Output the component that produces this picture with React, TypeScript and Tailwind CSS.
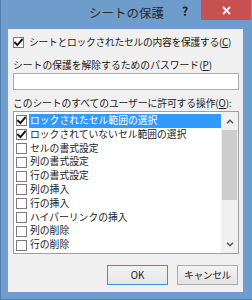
import React from "react";

const Check = () => (
  <svg width="9" height="9" viewBox="0 0 9 9" className="block">
    <path d="M1 4.6 L3.4 7 L8 1.6" fill="none" stroke="#111" strokeWidth="1.9" strokeLinecap="square" />
  </svg>
);

const Box = ({ checked }: { checked?: boolean }) => (
  <div className="w-[11px] h-[11px] shrink-0 border border-[#7a7a7a] bg-white flex items-center justify-center">
    {checked ? <Check /> : null}
  </div>
);

const items: { label: string; checked: boolean; selected?: boolean }[] = [
  { label: "ロックされたセル範囲の選択", checked: true, selected: true },
  { label: "ロックされていないセル範囲の選択", checked: true },
  { label: "セルの書式設定", checked: false },
  { label: "列の書式設定", checked: false },
  { label: "行の書式設定", checked: false },
  { label: "列の挿入", checked: false },
  { label: "行の挿入", checked: false },
  { label: "ハイパーリンクの挿入", checked: false },
  { label: "列の削除", checked: false },
  { label: "行の削除", checked: false },
];

export default function App() {
  return (
    <div className="w-[252px] h-[300px] bg-[#6f9dcb] flex flex-col border-l border-b border-[#4f7eab] font-['Noto_Sans_CJK_JP','Liberation_Sans',sans-serif] text-[#1a1a1a] overflow-hidden">
      <div className="relative h-[29px] shrink-0">
        <div className="pt-[4px] text-center text-[12.5px] leading-[18px] text-[#2b2b2b]">シートの保護</div>
        <div className="absolute left-[181px] top-[3px] text-[12px] font-bold leading-[16px] text-[#222]">?</div>
        <div className="absolute left-[200px] top-0 w-[50px] h-[20px] bg-[#c75050] flex items-center justify-center">
          <svg width="9" height="9" viewBox="0 0 9 9">
            <path d="M1 1 L8 8 M8 1 L1 8" stroke="#fff" strokeWidth="1.8" />
          </svg>
        </div>
      </div>
      <div className="ml-[7px] w-[235px] h-[263px] bg-[#f0f0f0] flex flex-col px-[5px] text-[9.8px]">
        <div className="mt-[6px] h-[14px] flex items-center">
          <Box checked />
          <span className="ml-[5px] leading-[14px] whitespace-nowrap tracking-[-0.3px]">
            シートとロックされたセルの内容を保護する(<span className="underline">C</span>)
          </span>
        </div>
        <div className="mt-[9px] h-[14px] leading-[14px] whitespace-nowrap">
          シートの保護を解除するためのパスワード(<span className="underline">P</span>)
        </div>
        <div className="mt-[1px] h-[17px] w-[226px] bg-white border border-[#abadb3]" />
        <div className="mt-[6px] h-[14px] leading-[14px] whitespace-nowrap tracking-[-0.1px]">
          このシートのすべてのユーザーに許可する操作(<span className="underline">O</span>):
        </div>
        <div className="mt-[1px] h-[143px] w-[226px] border border-[#a0a0a0] bg-white flex">
          <div className="flex-1 flex flex-col pt-[2px] pl-[2px]">
            {items.map((it) => (
              <div key={it.label} className="h-[13.8px] flex items-center">
                <Box checked={it.checked} />
                <div
                  className={
                    "ml-[2px] h-full flex-1 flex items-center pl-[1px] whitespace-nowrap leading-[13.8px] " +
                    (it.selected ? "bg-[#3399ff] text-white" : "")
                  }
                >
                  {it.label}
                </div>
              </div>
            ))}
          </div>
          <div className="w-[17px] bg-[#f0f0f0] flex flex-col">
            <div className="h-[18px] flex items-center justify-center">
              <svg width="8" height="5" viewBox="0 0 8 5">
                <path d="M1 4.2 L4 1.2 L7 4.2" fill="none" stroke="#555" strokeWidth="1.5" />
              </svg>
            </div>
            <div className="flex-1 flex flex-col">
              <div className="mx-[1px] h-[70px] bg-[#cdcdcd]" />
            </div>
            <div className="h-[17px] flex items-center justify-center">
              <svg width="8" height="5" viewBox="0 0 8 5">
                <path d="M1 0.8 L4 3.8 L7 0.8" fill="none" stroke="#555" strokeWidth="1.5" />
              </svg>
            </div>
          </div>
        </div>
        <div className="mt-[11px] flex justify-end gap-[9px]">
          <div className="w-[61px] h-[20px] border border-[#3c8ee6] bg-gradient-to-b from-[#f2f2f2] to-[#e6e6e6] flex items-center justify-center">
            OK
          </div>
          <div className="w-[61px] h-[20px] border border-[#acacac] bg-gradient-to-b from-[#f2f2f2] to-[#e3e3e3] flex items-center justify-center tracking-[-0.4px]">
            キャンセル
          </div>
        </div>
      </div>
    </div>
  );
}
